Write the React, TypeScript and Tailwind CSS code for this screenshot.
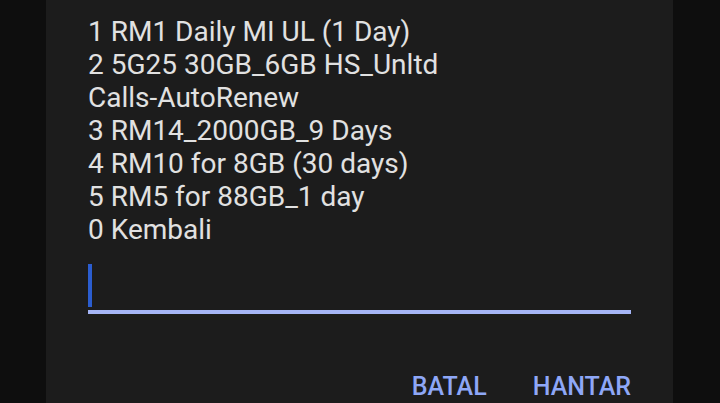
export default function App() {
  const lines = [
    '1 RM1 Daily MI UL (1 Day)',
    '2 5G25 30GB_6GB HS_Unltd',
    'Calls-AutoRenew',
    '3 RM14_2000GB_9 Days',
    '4 RM10 for 8GB (30 days)',
    '5 RM5 for 88GB_1 day',
    '0 Kembali',
  ];

  return (
    <div className="w-[720px] h-[403px] overflow-hidden bg-[#0e0e0e] flex font-['Roboto',sans-serif]">
      <div className="ml-[46px] w-[627px] h-full bg-[#1c1c1c] pl-[42px] pr-[42px] pt-[15px] flex flex-col">
        <div className="text-[28px] leading-[33px] text-[#e1e1e1]">
          {lines.map((l, i) => (
            <div key={i}>{l}</div>
          ))}
        </div>

        <div className="mt-[18px] flex flex-col">
          <div className="h-[43px] flex items-stretch">
            <div className="w-[4px] bg-[#2b5dcf]" />
          </div>
          <div className="mt-[3px] h-[4px] bg-[#a5b5f6]" />
        </div>

        <div className="mt-auto flex justify-end gap-[46px] text-[25px] leading-[33px] font-medium text-[#8ea7f7]">
          <span>BATAL</span>
          <span>HANTAR</span>
        </div>
      </div>
    </div>
  );
}
